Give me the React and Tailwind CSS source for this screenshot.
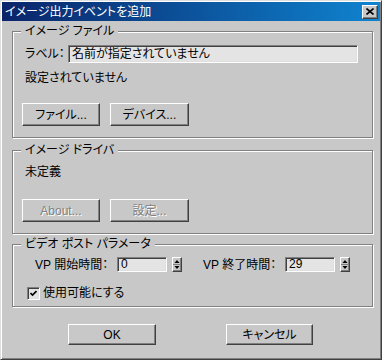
const raised =
  'border border-t-white border-l-white border-r-[#404040] border-b-[#404040] shadow-[inset_-1px_-1px_0_#808080]';
const sunken =
  'border border-t-[#808080] border-l-[#808080] border-r-white border-b-white shadow-[inset_1px_1px_0_#404040,inset_-1px_-1px_0_#dfdfdf]';

function Button({ children, className = '', disabled }) {
  return (
    <div
      className={`flex items-center justify-center bg-[#c8c8c8] ${raised} ${className} ${
        disabled ? 'text-[#808080] [text-shadow:1px_1px_0_#fff]' : 'text-black'
      }`}
    >
      {children}
    </div>
  );
}

function GroupBox({ title, className = '', children }) {
  return (
    <fieldset
      className={`ml-[10px] w-[361px] border border-[#808080] px-0 shadow-[inset_1px_1px_0_#fff,1px_1px_0_#fff] ${className}`}
    >
      <legend className="ml-[8px] bg-[#c8c8c8] px-[4px] leading-[14px]">{title}</legend>
      {children}
    </fieldset>
  );
}

function Spinner() {
  return (
    <div className={`ml-[5px] h-[15px] w-[10px] bg-[#c8c8c8] ${raised}`}>
      <svg width="8" height="13" viewBox="0 0 8 13" className="block">
        <path d="M4 2 L6.5 5 L1.5 5 Z" fill="#000" />
        <line x1="0" y1="6.5" x2="8" y2="6.5" stroke="#808080" strokeWidth="1" />
        <path d="M1.5 8 L6.5 8 L4 11 Z" fill="#000" />
      </svg>
    </div>
  );
}

function NumField({ value }) {
  return (
    <div className={`flex h-[15px] w-[50px] items-center bg-[#e4e4e4] pl-[3px] leading-[13px] ${sunken}`}>
      {value}
    </div>
  );
}

export default function App() {
  return (
    <div className="h-[360px] w-[382px] overflow-hidden border border-t-[#dfdfdf] border-l-[#dfdfdf] border-r-[#404040] border-b-[#404040] bg-[#c8c8c8] p-[1px] text-[12px] text-black shadow-[inset_1px_1px_0_#fff,inset_-1px_-1px_0_#808080] font-['Liberation_Sans','Noto_Sans_CJK_JP',sans-serif] [font-feature-settings:'palt']">
      <div className="flex h-[19px] items-center justify-between bg-gradient-to-r from-[#0a246a] to-[#1084d0] pl-[3px] pr-[2px]">
        <span className="leading-[14px] text-white">イメージ出力イベントを追加</span>
        <div className={`flex h-[14px] w-[16px] items-center justify-center bg-[#c8c8c8] ${raised}`}>
          <svg width="8" height="7" viewBox="0 0 8 7">
            <path d="M0.5 0.5 L7.5 6.5 M7.5 0.5 L0.5 6.5" stroke="#000" strokeWidth="1.6" />
          </svg>
        </div>
      </div>

      <GroupBox title="イメージ ファイル" className="mt-[3px]">
        <div className="pl-[9px] pt-[7px] pb-[11px]">
          <div className="flex h-[18px] items-center pl-[3px]">
            <span className="w-[43px] leading-[14px]">ラベル：</span>
            <div className={`flex h-[18px] w-[290px] items-center bg-[#e4e4e4] pl-[3px] leading-[14px] ${sunken}`}>
              名前が指定されていません
            </div>
          </div>
          <div className="mt-[8px] pl-[3px] leading-[14px]">設定されていません</div>
          <div className="mt-[18px] flex gap-[10px]">
            <Button className="h-[23px] w-[78px]">ファイル...</Button>
            <Button className="h-[23px] w-[79px]">デバイス...</Button>
          </div>
        </div>
      </GroupBox>

      <GroupBox title="イメージ ドライバ" className="mt-[5px]">
        <div className="pl-[9px] pt-[8px] pb-[11px]">
          <div className="pl-[3px] leading-[14px]">未定義</div>
          <div className="mt-[20px] flex gap-[10px]">
            <Button className="h-[23px] w-[78px]" disabled>
              About...
            </Button>
            <Button className="h-[23px] w-[79px]" disabled>
              設定...
            </Button>
          </div>
        </div>
      </GroupBox>

      <GroupBox title="ビデオ ポスト パラメータ" className="mt-[3px]">
        <div className="pt-[6px] pb-[6px]">
          <div className="flex h-[15px] items-center pl-[22px]">
            <span className="w-[82px] leading-[14px]">VP 開始時間：</span>
            <NumField value="0" />
            <Spinner />
            <span className="ml-[21px] w-[82px] leading-[14px]">VP 終了時間：</span>
            <NumField value="29" />
            <Spinner />
          </div>
          <div className="mt-[14px] flex items-center gap-[3px] pl-[14px]">
            <div className={`flex h-[13px] w-[13px] items-center justify-center bg-[#e4e4e4] ${sunken}`}>
              <svg width="7" height="7" viewBox="0 0 7 7">
                <path d="M0.5 3 L2.5 5 L6.5 1" stroke="#000" strokeWidth="1.6" fill="none" />
              </svg>
            </div>
            <span className="leading-[14px]">使用可能にする</span>
          </div>
        </div>
      </GroupBox>

      <div className="mt-[17px] flex pl-[66px]">
        <Button className="h-[21px] w-[88px]">OK</Button>
        <Button className="ml-[70px] h-[21px] w-[87px]">キャンセル</Button>
      </div>
    </div>
  );
}
